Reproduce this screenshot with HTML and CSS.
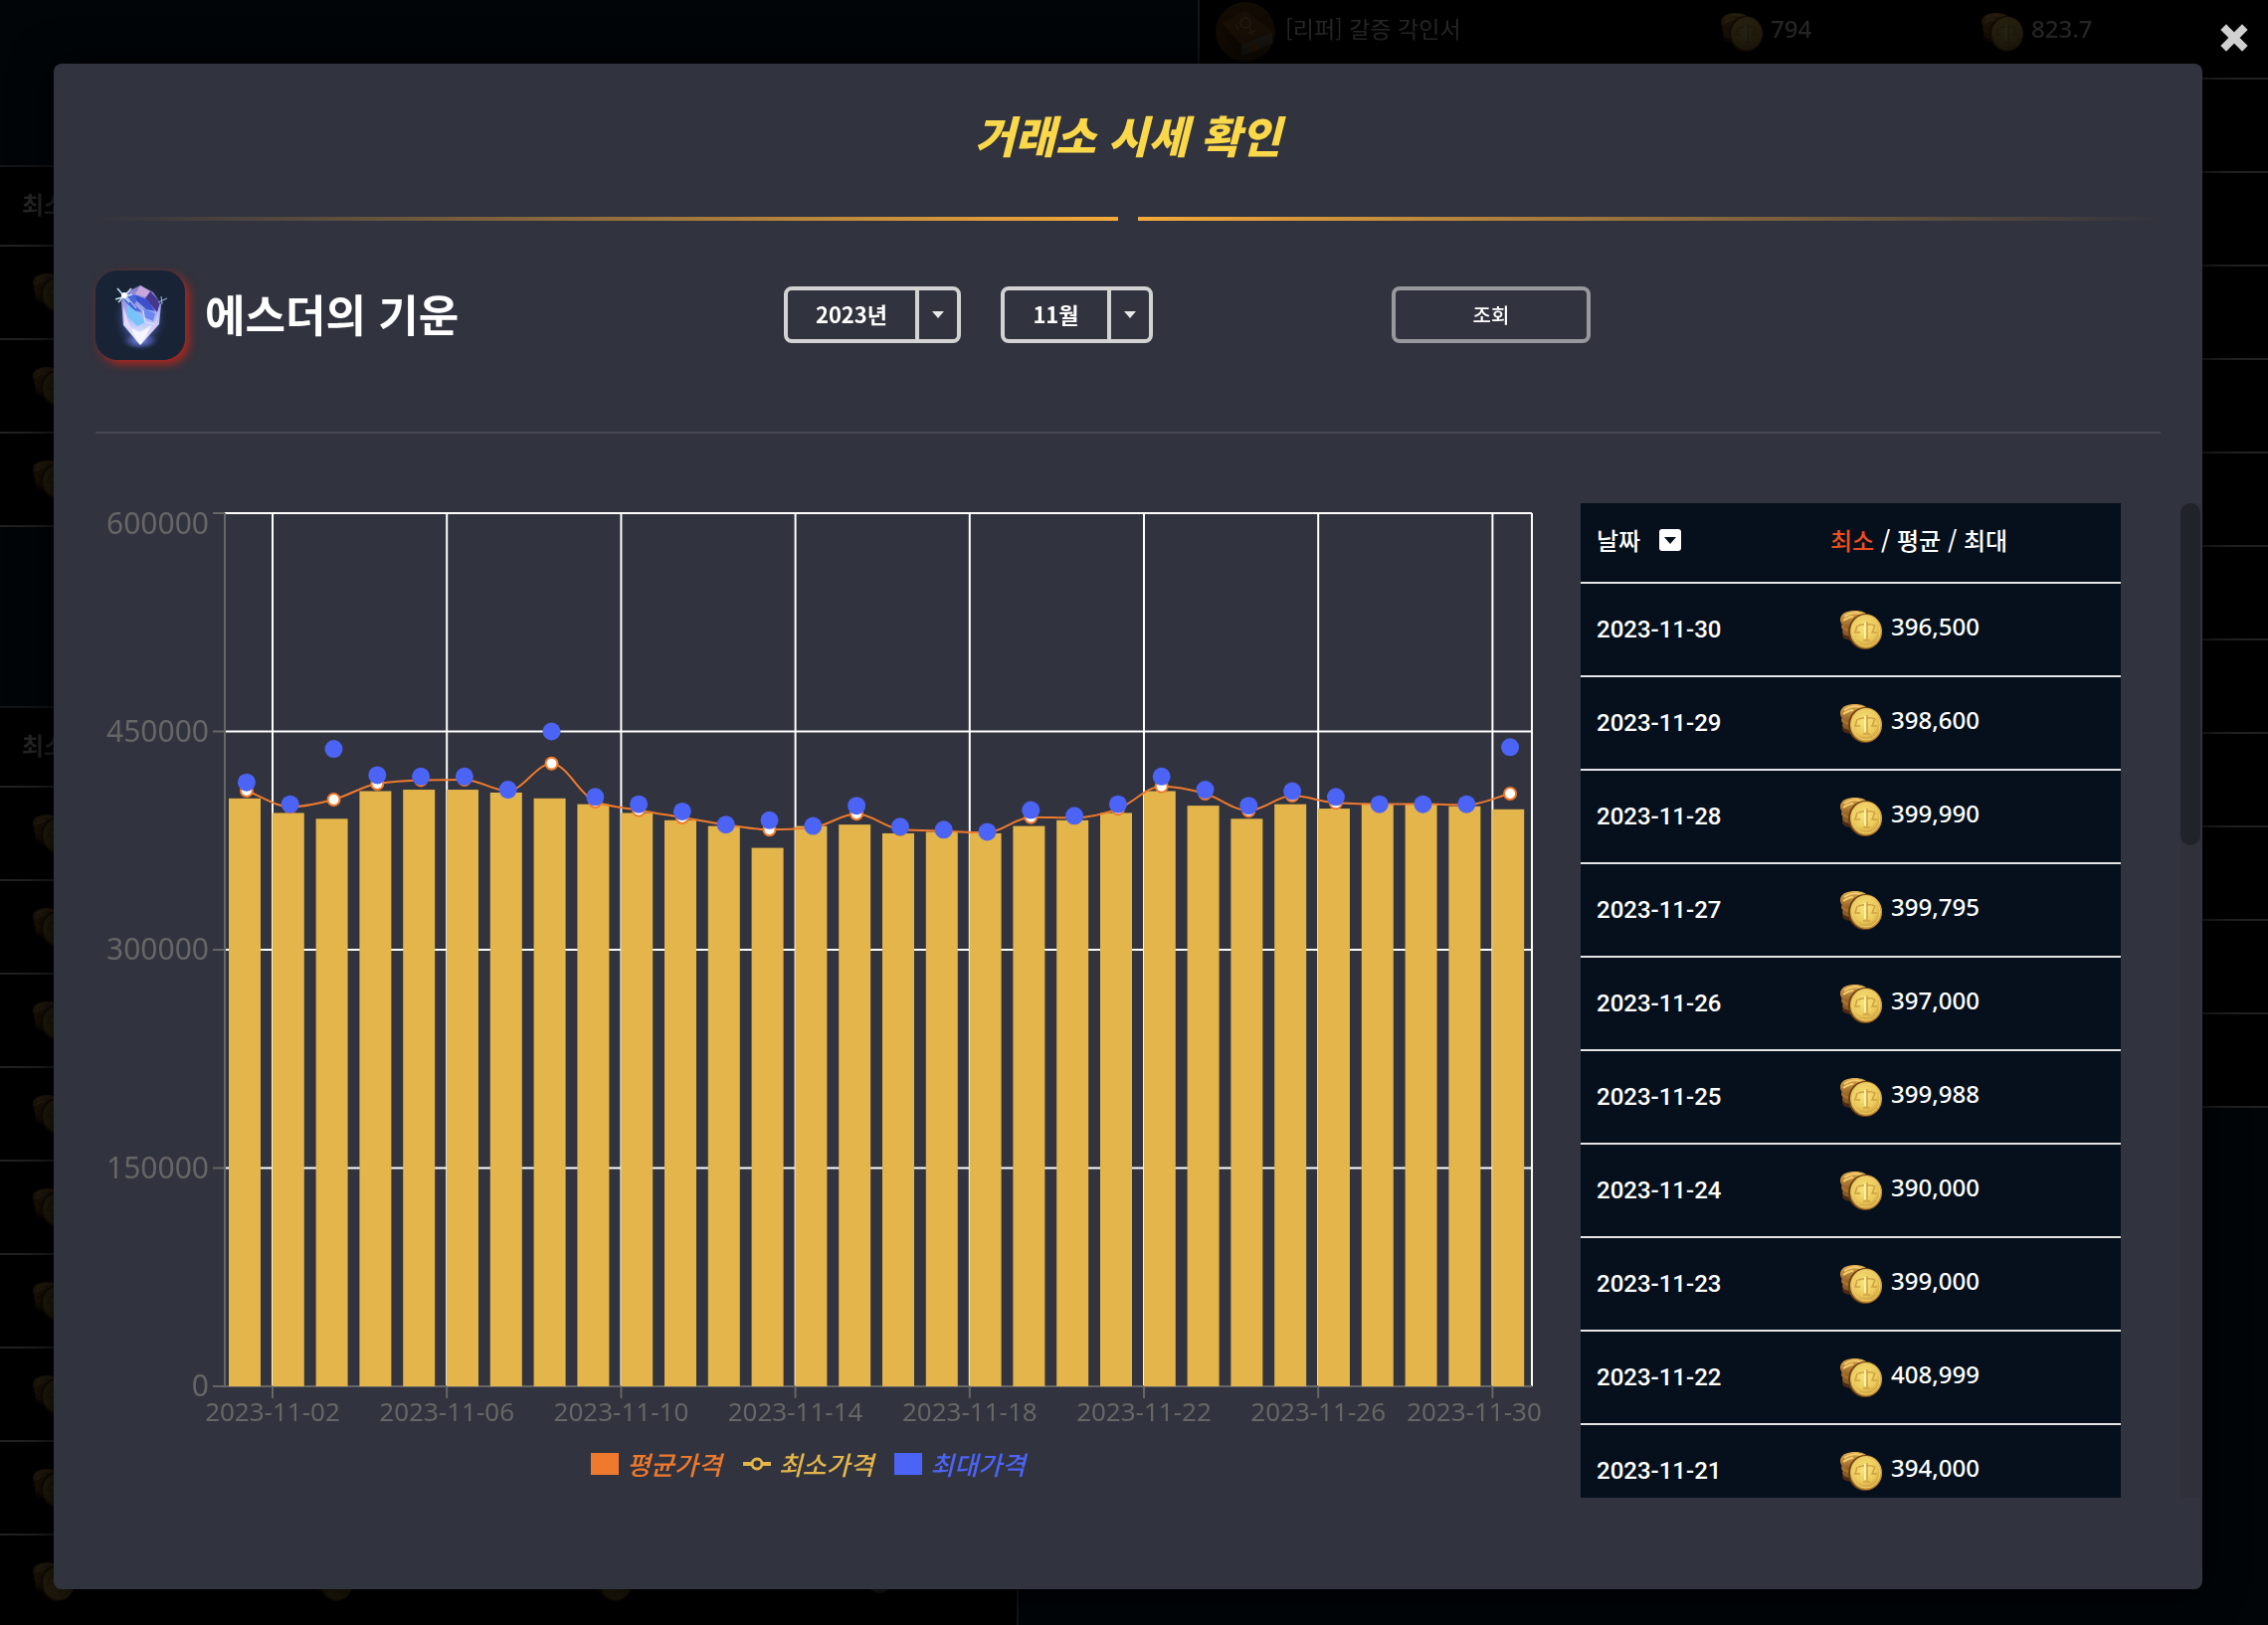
FILE: index.html
```html
<!DOCTYPE html>
<html lang="ko">
<head>
<meta charset="utf-8">
<title>거래소 시세 확인</title>
<link rel="stylesheet" href="styles.css">
</head>
<body>
<svg class="sprite" aria-hidden="true">
  <defs>
    <radialGradient id="coinFace" cx="45%" cy="40%" r="60%">
      <stop offset="0" stop-color="#f8e57c"/>
      <stop offset=".65" stop-color="#ebc95a"/>
      <stop offset="1" stop-color="#c48f32"/>
    </radialGradient>
    <linearGradient id="coinBack" x1="0" y1="0" x2="0" y2="1">
      <stop offset="0" stop-color="#e0ab4e"/>
      <stop offset="1" stop-color="#8a5822"/>
    </linearGradient>
  </defs>
  <symbol id="coin" viewBox="0 0 44 40">
    <ellipse cx="12" cy="26" rx="9" ry="5" fill="#4a2a14"/>
    <ellipse cx="11" cy="22" rx="8" ry="5" fill="#8a5a26"/>
    <ellipse cx="10" cy="17" rx="8" ry="5" fill="#a8702c"/>
    <path d="M1 9C2 3 9 1 16 1c6 0 12 2 13 6L14 20C7 20 0 15 1 9z" fill="url(#coinBack)"/>
    <path d="M5 7c5-4 13-5 19-2M4 11c3-2 6-4 10-4" stroke="#f3cd70" stroke-width="2" fill="none"/>
    <ellipse cx="26" cy="22" rx="17" ry="18" fill="#6e4318"/>
    <ellipse cx="27" cy="22" rx="16" ry="17" fill="url(#coinFace)"/>
    <ellipse cx="27" cy="22" rx="14" ry="15" fill="none" stroke="#f0d470" stroke-width="1"/>
    <path d="M28 12v18M19 16c6-2 12-2 17 0M18 16l-2 7h5M36 16l-3 7h5M24 31h7" stroke="#cfa044" stroke-width="1.5" fill="none"/>
    <path d="M26 13v16" stroke="#fff3a6" stroke-width="2"/>
  </symbol>
</svg>

<div class="market" aria-hidden="true">
  <div class="market-left">
    <div class="list list-first">
      <div class="list-head">최소</div>
      <div class="list-row"><svg class="coin"><use href="#coin"/></svg></div>
      <div class="list-row"><svg class="coin"><use href="#coin"/></svg></div>
      <div class="list-row"><svg class="coin"><use href="#coin"/></svg></div>
    </div>
    <div class="list list-second">
      <div class="list-head">최소</div>
      <div class="list-row"><svg class="coin"><use href="#coin"/></svg></div>
      <div class="list-row"><svg class="coin"><use href="#coin"/></svg></div>
      <div class="list-row"><svg class="coin"><use href="#coin"/></svg></div>
      <div class="list-row"><svg class="coin"><use href="#coin"/></svg></div>
      <div class="list-row"><svg class="coin"><use href="#coin"/></svg></div>
      <div class="list-row"><svg class="coin"><use href="#coin"/></svg></div>
      <div class="list-row"><svg class="coin"><use href="#coin"/></svg></div>
      <div class="list-row"><svg class="coin"><use href="#coin"/></svg></div>
      <div class="list-row"><svg class="coin"><use href="#coin"/></svg><svg class="coin"><use href="#coin"/></svg><svg class="coin"><use href="#coin"/></svg><span class="info-dot"></span></div>
    </div>
  </div>
  <div class="market-right">
    <div class="item-row">
      <svg class="book" viewBox="0 0 60 60">
        <circle cx="30" cy="30" r="30" fill="#5a3a10"/>
        <path d="M6 21L30 9l27 20-31 14z" fill="#7a4a20"/>
        <path d="M6 21l20 22-1 11L10 37z" fill="#4e2c10"/>
        <path d="M26 43l31-13v12L27 54z" fill="#6d6854"/>
        <circle cx="30" cy="21" r="5" fill="none" stroke="#a5835a" stroke-width="1.5"/>
        <path d="M20 22l3 6M32 32l8-3M34 26l4 8" stroke="#a5835a" stroke-width="1.5" fill="none"/>
        <circle cx="38" cy="46" r="4" fill="#b0601c"/>
      </svg>
      <span class="item-label">[리퍼] 갈증 각인서</span>
      <span class="item-price"><svg class="coin"><use href="#coin"/></svg><span class="price-text">794</span></span>
      <span class="item-price"><svg class="coin"><use href="#coin"/></svg><span class="price-text">823.7</span></span>
    </div>
    <div class="item-row"></div><div class="item-row"></div><div class="item-row"></div>
    <div class="item-row"></div><div class="item-row"></div><div class="item-row"></div>
    <div class="item-row"></div><div class="item-row"></div><div class="item-row"></div>
    <div class="item-row"></div><div class="item-row"></div>
  </div>
</div>

<div class="overlay">
  <button class="close" type="button" aria-label="닫기">
    <svg viewBox="0 0 28 28"><path d="M6 6l16 16M22 6L6 22" stroke="#d0d0d0" stroke-width="8" stroke-linecap="square"/></svg>
  </button>
  <main class="modal" role="dialog" aria-labelledby="dialog-title">
    <header class="modal-head">
      <h1 class="title" id="dialog-title">거래소 시세 확인</h1>
      <div class="rules"><span class="rule rule-left"></span><span class="rule rule-right"></span></div>
    </header>

    <section class="toolbar">
      <div class="item">
        <svg class="item-icon" viewBox="0 0 90 90">
          <defs>
            <radialGradient id="glow" cx="50%" cy="52%" r="50%">
              <stop offset="0" stop-color="#8fa4ff" stop-opacity=".9"/>
              <stop offset=".6" stop-color="#5a66c8" stop-opacity=".45"/>
              <stop offset="1" stop-color="#182435" stop-opacity="0"/>
            </radialGradient>
            <linearGradient id="gem" x1="0" y1="0" x2="0" y2="1">
              <stop offset="0" stop-color="#8c78c8"/>
              <stop offset=".5" stop-color="#a4b4f6"/>
              <stop offset="1" stop-color="#ffffff"/>
            </linearGradient>
          </defs>
          <rect width="90" height="90" fill="#182435"/>
          <ellipse cx="45" cy="46" rx="28" ry="36" fill="url(#glow)"/>
          <ellipse cx="45" cy="70" rx="20" ry="10" fill="url(#glow)"/>
          <path d="M45 15l13 7 8 12-2 20-19 21-17-20-2-24 7-10z" fill="url(#gem)"/>
          <path d="M45 15l10 6-3 6-12-3z" fill="#c8a8dc"/>
          <path d="M55 21l10 11-3 10-12-14z" fill="#45378e"/>
          <path d="M33 23l12 3-6 8 8 8-9-2-9-10z" fill="#4a67dc"/>
          <path d="M40 25l12 4 8 12-9-2-9-8z" fill="#3a50cd"/>
          <path d="M32 34l12 10 6 8-8 4-10-10z" fill="#76c3fa"/>
          <path d="M48 38l12 5-2 8-9-4z" fill="#6d85f0"/>
          <path d="M28 36l6 18 11 14-16-13z" fill="#e5d8fa"/>
          <path d="M64 36l-4 17-15 20 17-18z" fill="#dcc8f6"/>
          <path d="M36 58l9 4 11-7-5 11-6 7-6-8z" fill="#f4f5ff"/>
          <path d="M48 40l2 12 9 2M32 27l9 11" stroke="#dde8ff" stroke-width="1" fill="none"/>
          <path d="M22 18l12 14M20 29l17-5M36 18L23 32" stroke="#c5e4f5" stroke-width="1.5"/>
          <circle cx="29" cy="25" r="3" fill="#fff"/>
          <path d="M63 32l9-4M66 26l1 8" stroke="#a5bfe0" stroke-width="1"/>
        </svg>
        <h2 class="item-name">에스더의 기운</h2>
      </div>
      <form class="filters">
        <label class="picker picker-year"><select aria-label="연도"><option>2023년</option></select><span class="caret"></span></label>
        <label class="picker picker-month"><select aria-label="월"><option>11월</option></select><span class="caret"></span></label>
        <button class="search" type="button">조회</button>
      </form>
    </section>

    <section class="content">
      <figure class="chart">
        <svg class="plot" id="plot" viewBox="0 0 1469 944" role="img" aria-label="2023년 11월 시세"></svg>
        <figcaption class="legend">
          <span class="legend-item avg"><i class="swatch"></i>평균가격</span>
          <span class="legend-item min"><svg class="line-mark" viewBox="0 0 28 22"><path d="M0 11h9M19 11h9" stroke="currentColor" stroke-width="4"/><circle cx="14" cy="11" r="5" fill="none" stroke="currentColor" stroke-width="3"/></svg>최소가격</span>
          <span class="legend-item max"><i class="swatch"></i>최대가격</span>
        </figcaption>
      </figure>
      <div class="prices">
        <table class="price-table">
          <thead>
            <tr>
              <th scope="col"><span class="th-date">날짜 <svg class="sort" viewBox="0 0 22 22"><rect width="22" height="22" rx="3" fill="#fff"/><path d="M5 8h12l-6 7z" fill="#06101c"/></svg></span></th>
              <th scope="col"><span class="hot">최소</span> / 평균 / 최대</th>
            </tr>
          </thead>
          <tbody>
            <tr><td>2023-11-30</td><td><span class="price"><svg class="coin"><use href="#coin"/></svg><span class="price-text">396,500</span></span></td></tr>
            <tr><td>2023-11-29</td><td><span class="price"><svg class="coin"><use href="#coin"/></svg><span class="price-text">398,600</span></span></td></tr>
            <tr><td>2023-11-28</td><td><span class="price"><svg class="coin"><use href="#coin"/></svg><span class="price-text">399,990</span></span></td></tr>
            <tr><td>2023-11-27</td><td><span class="price"><svg class="coin"><use href="#coin"/></svg><span class="price-text">399,795</span></span></td></tr>
            <tr><td>2023-11-26</td><td><span class="price"><svg class="coin"><use href="#coin"/></svg><span class="price-text">397,000</span></span></td></tr>
            <tr><td>2023-11-25</td><td><span class="price"><svg class="coin"><use href="#coin"/></svg><span class="price-text">399,988</span></span></td></tr>
            <tr><td>2023-11-24</td><td><span class="price"><svg class="coin"><use href="#coin"/></svg><span class="price-text">390,000</span></span></td></tr>
            <tr><td>2023-11-23</td><td><span class="price"><svg class="coin"><use href="#coin"/></svg><span class="price-text">399,000</span></span></td></tr>
            <tr><td>2023-11-22</td><td><span class="price"><svg class="coin"><use href="#coin"/></svg><span class="price-text">408,999</span></span></td></tr>
            <tr><td>2023-11-21</td><td><span class="price"><svg class="coin"><use href="#coin"/></svg><span class="price-text">394,000</span></span></td></tr>
          </tbody>
        </table>
      </div>
      <div class="scroll-track"><div class="scroll-thumb"></div></div>
    </section>
  </main>
</div>
<script type="module">
// Daily prices for the month: [minimum, average, maximum]
const days = [
  [404000, 409300, 415000], [394000, 398200, 400000], [390000, 403200, 438000],
  [409000, 414100, 420000], [410000, 416600, 419000], [410000, 416900, 419000],
  [408000, 409100, 410000], [404000, 428000, 450000], [400000, 401800, 405000],
  [394000, 395900, 400000], [389000, 390900, 395000], [385000, 385900, 386000],
  [370000, 382500, 389000], [385000, 384000, 385000], [386000, 393400, 399000],
  [380000, 382700, 384500], [381000, 381500, 382500], [380000, 380600, 381000],
  [385000, 391100, 396000], [389000, 390700, 392000], [394000, 396800, 400000],
  [408999, 412300, 419000], [399000, 407300, 410000], [390000, 395500, 399000],
  [399988, 405900, 409000], [397000, 400900, 405000], [399795, 400100, 400000],
  [399990, 400100, 400000], [398600, 399600, 400000], [396500, 407300, 439200]
];

const left = 130, right = 1444, ceiling = 10, floor = 888;
const step = (right - left) / days.length;
const y = v => floor - v / 600000 * (floor - ceiling);
const cx = i => left + step * (i + 0.5);
const out = [];
const line = (x1, y1, x2, y2, color) =>
  out.push(`<line x1="${x1}" y1="${y1}" x2="${x2}" y2="${y2}" stroke="${color}" stroke-width="2"/>`);
const text = (x, ty, s, anchor) =>
  out.push(`<text class="tick-${anchor}" x="${x}" y="${ty}" text-anchor="${anchor}">${s}</text>`);

for (const v of [150000, 300000, 450000, 600000]) line(left, y(v), right, y(v), "#fff");
const tickX = k => left + 48 + step * 4 * k;
for (let k = 0; k < 8; k++) line(tickX(k), ceiling, tickX(k), floor, "#fff");
line(right, ceiling, right, floor, "#fff");

line(left, ceiling, left, floor, "#666");
line(left, floor, right, floor, "#666");
for (const v of [0, 150000, 300000, 450000, 600000]) {
  line(left - 12, y(v), left, y(v), "#666");
  text(left - 16, Math.max(y(v) + 10, 31), v, "end");
}
for (let k = 0; k < 8; k++) {
  line(tickX(k), floor, tickX(k), floor + 12, "#666");
  const label = "2023-11-" + String(2 + 4 * k).padStart(2, "0");
  text(Math.min(tickX(k), right - 58), floor + 35, label, "middle");
}

days.forEach((d, i) =>
  out.push(`<rect x="${left + 4 + step * i}" y="${y(d[0])}" width="32" height="${floor - y(d[0])}" fill="#e3b54a"/>`));

// Monotone cubic curve through the averages
const p = days.map((d, i) => [cx(i), y(d[1])]);
const slope = p.slice(1).map((q, i) => (q[1] - p[i][1]) / step);
const tangent = p.map((_, i) => {
  if (i === 0) return slope[0];
  if (i === p.length - 1) return slope[i - 1];
  const a = slope[i - 1], b = slope[i];
  if (a * b <= 0) return 0;
  return Math.sign(a) * 2 * Math.min(Math.abs(a), Math.abs(b), Math.abs(a + b) / 4);
});
let path = `M${p[0]}`;
for (let i = 1; i < p.length; i++) {
  path += `C${p[i - 1][0] + step / 3},${p[i - 1][1] + tangent[i - 1] * step / 3} ` +
    `${p[i][0] - step / 3},${p[i][1] - tangent[i] * step / 3} ${p[i]}`;
}
out.push(`<path d="${path}" fill="none" stroke="#ef7a2e" stroke-width="2"/>`);
p.forEach(q => out.push(`<circle cx="${q[0]}" cy="${q[1]}" r="6" fill="#fff" stroke="#ef7a2e" stroke-width="2"/>`));
days.forEach((d, i) => out.push(`<circle cx="${cx(i)}" cy="${y(d[2])}" r="9" fill="#4b64f6"/>`));

document.getElementById("plot").innerHTML = out.join("");
</script>
</body>
</html>
```
FILE: styles.css
```css
* { box-sizing: border-box; }

body {
  margin: 0;
  min-height: 100vh;
  overflow: hidden;
  background: #010508;
  color: #fff;
  font-family: "Noto Sans", "Noto Sans CJK KR", sans-serif;
  font-size: 24px;
}

.sprite { position: absolute; width: 0; height: 0; }
.coin { width: 44px; height: 40px; flex: none; }

/* Dimmed market page behind the dialog */
.market {
  position: fixed;
  inset: 0;
  display: flex;
  justify-content: space-between;
  align-items: flex-start;
  overflow: hidden;
  font-family: "Noto Sans CJK KR", sans-serif;
}
.market-left { width: 1024px; padding-top: 166px; }
.list {
  background: #000;
  border-top: 2px solid #121518;
  border-right: 2px solid #121518;
}
.list-second { margin-top: 180px; }
.list-head, .list-row {
  display: flex;
  align-items: center;
  border-bottom: 2px solid #212121;
}
.list-head {
  height: 80px;
  padding: 0 0 6px 22px;
  color: #272727;
  font-weight: 700;
}
.list-row { height: 94px; padding-left: 32px; gap: 236px; }
.list-row .coin, .item-row .coin { opacity: .15; }
.info-dot { width: 24px; height: 24px; border-radius: 50%; background: #16181b; }

.market-right {
  width: 1076px;
  margin-top: -14px;
  background: #000;
  border-left: 2px solid #14171a;
}
.item-row {
  display: flex;
  align-items: center;
  height: 94px;
  padding-left: 16px;
  border-bottom: 2px solid #212121;
  color: #272727;
}
.book { width: 60px; height: 60px; opacity: .2; }
.item-label { width: 447px; padding: 0 0 8px 10px; font-size: 23px; }
.item-price { display: flex; align-items: center; gap: 7px; width: 262px; }

/* Dialog */
.overlay {
  position: relative;
  padding: 64px 66px 36px 54px;
}
.close {
  position: absolute;
  top: 24px;
  right: 20px;
  width: 28px;
  height: 28px;
  padding: 0;
  border: 0;
  background: none;
}
.close svg { display: block; }
.modal {
  padding-bottom: 92px;
  border-radius: 8px;
  background: #31333e;
  box-shadow: 0 0 40px #000;
}
.modal-head { padding: 0 42px; }
.title {
  margin: 0;
  height: 154px;
  line-height: 142px;
  text-align: center;
  color: #fbd84a;
  font-size: 44px;
  font-style: italic;
  font-weight: 900;
  font-family: "Noto Sans CJK KR", sans-serif;
}
.rules { display: flex; gap: 20px; }
.rule { flex: 1; height: 4px; }
.rule-left { background: linear-gradient(to left, #f5aa3c, transparent); }
.rule-right { background: linear-gradient(to right, #f5aa3c, transparent); }

.toolbar {
  display: grid;
  grid-template-columns: 1fr 2fr;
  align-items: center;
  margin: 0 42px;
  padding: 50px 0 72px;
  border-bottom: 2px solid #464751;
}
.item { display: flex; align-items: center; gap: 20px; }
.item-icon {
  width: 90px;
  height: 90px;
  border-radius: 22px;
  box-shadow: 4px 4px 10px #b3261c;
}
.item-name {
  margin: 0;
  padding-bottom: 4px;
  font-size: 44px;
  line-height: 60px;
  font-weight: 700;
  font-family: "Noto Sans CJK KR", sans-serif;
}
.filters { display: flex; align-items: center; margin: 0; padding-bottom: 2px; }
.picker {
  position: relative;
  height: 57px;
  margin-right: 40px;
  border: 4px solid #d3d3d3;
  border-radius: 8px;
}
.picker-year { width: 178px; }
.picker-month { width: 153px; }
.picker select {
  appearance: none;
  width: 100%;
  height: 100%;
  padding: 0 42px 2px 0;
  border: 0;
  background: none;
  color: #fff;
  font: 700 22px "Noto Sans CJK KR", sans-serif;
  text-align-last: center;
}
.caret {
  position: absolute;
  top: 0;
  right: 0;
  bottom: 0;
  width: 42px;
  display: grid;
  place-items: center;
  border-left: 4px solid #d3d3d3;
  pointer-events: none;
}
.caret::before {
  content: "";
  border: 6px solid transparent;
  border-top: 7px solid #e8e8e8;
  border-bottom: 0;
}
.search {
  width: 200px;
  height: 57px;
  margin-left: 200px;
  padding: 0;
  border: 4px solid #98999f;
  border-radius: 8px;
  background: none;
  color: #fff;
  font: 500 20px "Noto Sans CJK KR", sans-serif;
}

.content {
  display: grid;
  grid-template-columns: 1fr 543px 80px;
  padding: 70px 2px 0 42px;
}
.chart { margin: 0 24px 0 0; }
.plot { display: block; width: 100%; height: auto; }
.plot text { fill: #666; font-size: 30px; }
.plot .tick-middle { font-size: 26px; }
.legend {
  display: flex;
  justify-content: center;
  gap: 21px;
  padding-right: 36px;
  font: italic 500 26px/44px "Noto Sans CJK KR", sans-serif;
}
.legend-item { display: flex; align-items: center; gap: 8px; }
.avg { color: #ef7a2e; }
.min { color: #e3b54a; }
.max { color: #4b64f6; }
.swatch, .line-mark { width: 28px; height: 22px; }
.swatch { background: currentColor; }

.prices { height: 1000px; overflow: hidden; }
.price-table {
  width: 100%;
  border-spacing: 0;
  table-layout: fixed;
  background: #06101c;
}
.price-table th, .price-table td {
  height: 94px;
  padding: 0 0 0 16px;
  border-bottom: 2px solid #e5e5e5;
  text-align: left;
}
.price-table th {
  height: 81px;
  padding-bottom: 6px;
  font: 500 24px "Noto Sans CJK KR", sans-serif;
}
.price-table th:first-child { width: 235px; }
.price-table td { font: 500 24px Roboto, sans-serif; }
.price-table td:last-child { padding-left: 25px; }
.th-date { display: flex; align-items: center; gap: 19px; }
.sort { width: 22px; height: 22px; }
.hot { color: #f04e23; }
.price { display: flex; align-items: center; gap: 8px; }
.price-text {
  padding-bottom: 8px;
  font-family: "Noto Sans", sans-serif;
  font-weight: 500;
}

.scroll-track {
  justify-self: end;
  width: 20px;
  height: 1000px;
  background: #2f3039;
}
.scroll-thumb { height: 344px; border-radius: 10px; background: #21232b; }
```
